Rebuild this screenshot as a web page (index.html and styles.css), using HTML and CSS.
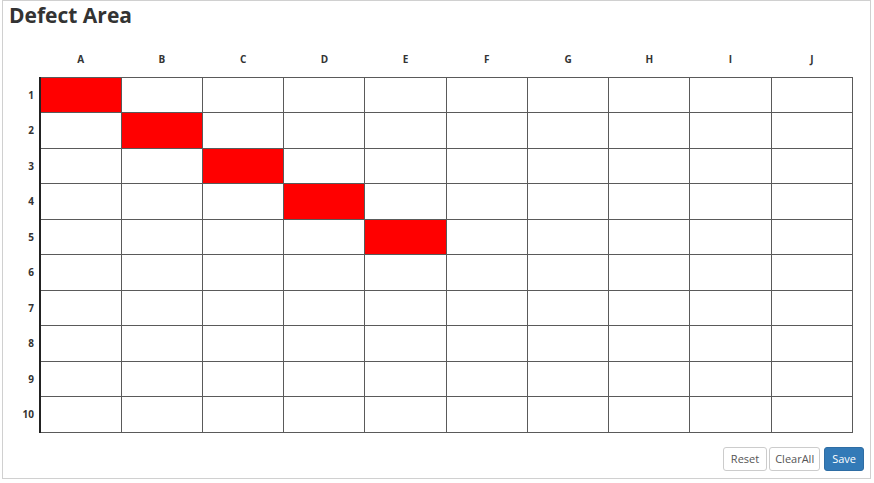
FILE: index.html
```html
<!DOCTYPE html>
<html lang="en">
<head>
    <meta charset="UTF-8">
    <meta name="viewport" content="width=device-width, initial-scale=1.0">
    <title>Defect Area</title>
    <link rel="stylesheet" href="styles.css">
</head>
<body>
    <div class="panel">
        <h2 class="title">Defect Area</h2>

        <table class="grid">
            <thead>
                <tr>
                    <th class="corner"></th>
                    <th>A</th><th>B</th><th>C</th><th>D</th><th>E</th>
                    <th>F</th><th>G</th><th>H</th><th>I</th><th>J</th>
                </tr>
            </thead>
            <tbody id="gridBody"></tbody>
        </table>

        <div class="actions">
            <button class="btn btn-reset">Reset</button>
            <button class="btn btn-clear">ClearAll</button>
            <button class="btn btn-save">Save</button>
        </div>
    </div>

    <script>
        const body = document.getElementById('gridBody');
        for (let r = 1; r <= 10; r++) {
            const row = document.createElement('tr');
            const head = document.createElement('th');
            head.className = 'rowhead';
            head.innerText = r;
            row.appendChild(head);
            for (let c = 1; c <= 10; c++) {
                const cell = document.createElement('td');
                if (c === 1) cell.classList.add('first');
                if (c === 5) cell.classList.add('mid');
                // diagonal marks
                if (r === c && r <= 5) cell.classList.add('marked');
                row.appendChild(cell);
            }
            body.appendChild(row);
        }
    </script>
</body>
</html>
```

FILE: styles.css
```css
body {
    margin: 0;
    font-family: 'Open Sans', 'Liberation Sans', sans-serif;
    color: #333;
    background: #fff;
}
.panel {
    margin-left: 2px;
    width: 867px;
    height: 477px;
    border: 1px solid #d0d0d0;
    box-sizing: content-box;
    display: flex;
    flex-direction: column;
}
.title {
    margin: 0;
    padding-left: 6px;
    font-size: 21px;
    line-height: 28px;
    font-weight: 700;
    color: #333;
}
.grid {
    margin: 16px 0 0 6px;
    border-collapse: collapse;
    table-layout: fixed;
    width: 844px;
}
.grid th {
    font-size: 10px;
    font-weight: 700;
    color: #333;
    padding: 0;
}
.grid thead th {
    height: 32px;
    width: 81.2px;
    text-align: center;
    vertical-align: top;
    padding-top: 7px;
    box-sizing: border-box;
}
.grid thead th.corner {
    width: 31px;
}
.grid .rowhead {
    text-align: right;
    padding-right: 5px;
    height: 35.5px;
}
.grid td {
    border: 1px solid #5a5a5a;
    height: 34.5px;
    padding: 0;
}
.grid td.first {
    border-left: 2px solid #222;
}
.grid td.mid {
    border-left: 1px solid #000;
}
.grid td.marked {
    background: #ff0000;
}
.actions {
    display: flex;
    justify-content: flex-end;
    margin-top: 14px;
    padding-right: 6px;
}
.btn {
    font-family: 'Open Sans', 'Liberation Sans', sans-serif;
    font-size: 11px;
    height: 24px;
    padding: 0 7px;
    border: 1px solid #ccc;
    border-radius: 3px;
    background: #fff;
    color: #555;
    cursor: pointer;
}
.btn-reset {
    margin-right: 2px;
}
.btn-clear {
    padding: 0 5px;
    margin-right: 4px;
}
.btn-save {
    background: #337ab7;
    border-color: #2e6da4;
    color: #fff;
}
```
